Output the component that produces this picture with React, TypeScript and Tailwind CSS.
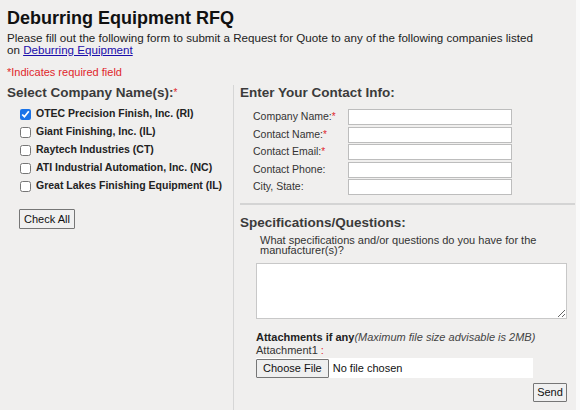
import React from "react";

const companies = [
  "OTEC Precision Finish, Inc. (RI)",
  "Giant Finishing, Inc. (IL)",
  "Raytech Industries (CT)",
  "ATI Industrial Automation, Inc. (NC)",
  "Great Lakes Finishing Equipment (IL)",
];

const fields = [
  { label: "Company Name:", req: true },
  { label: "Contact Name:", req: true },
  { label: "Contact Email:", req: true },
  { label: "Contact Phone:", req: false },
  { label: "City, State:", req: false },
];

export default function App() {
  return (
    <div className="w-[580px] h-[410px] bg-[#fafafa] overflow-hidden" style={{ fontFamily: '"Liberation Sans", Arial, sans-serif' }}>
      <div className="w-[576px] h-[410px] bg-[#f0efee] text-[#222]">
        <div className="pl-[7px] pt-[7px]">
          <h1 className="text-[18px] leading-[22px] font-bold text-[#111]">Deburring Equipment RFQ</h1>
          <p className="text-[11.6px] leading-[12px] mt-[3px] w-[565px] text-[#222]">
            Please fill out the following form to submit a Request for Quote to any of the following companies listed
            <br />
            on <a className="text-[#1a0dab] underline" href="#">Deburring Equipment</a>
          </p>
          <p className="text-[11px] leading-[12px] text-[#e0262b] mt-[10px]">*Indicates required field</p>
        </div>
        <div className="flex mt-[7px]">
          <div className="w-[234px] pl-[7px] border-r border-[#d6d6d6] h-[330px]">
            <h2 className="text-[13.5px] leading-[16px] font-bold text-[#3b3b3b]">
              Select Company Name(s):<span className="text-[#e0262b] text-[10px] align-top font-normal">*</span>
            </h2>
            <div className="mt-[4px] pl-[13px] flex flex-col">
              {companies.map((c, i) => (
                <label key={c} className="flex items-center h-[18px] text-[10.5px] font-bold text-[#222]">
                  <input type="checkbox" defaultChecked={i === 0} className="w-[11px] h-[11px] m-0 mr-[5px] accent-[#1a73e8]" />
                  {c}
                </label>
              ))}
            </div>
            <button className="mt-[14px] ml-[12px] h-[20px] w-[56px] text-[11px] bg-[#f0f0f0] border border-[#767676] rounded-[1px] text-[#111]">
              Check All
            </button>
          </div>
          <div className="flex-1 pl-[6px]">
            <h2 className="text-[13.5px] leading-[16px] font-bold text-[#3b3b3b]">Enter Your Contact Info:</h2>
            <div className="mt-[8px] pl-[13px] flex flex-col gap-[1.5px]">
              {fields.map((f) => (
                <div key={f.label} className="flex items-center h-[16px]">
                  <span className="w-[95px] text-[10.5px] text-[#333]">
                    {f.label}
                    {f.req && <span className="text-[#e0262b] text-[10px] align-top">*</span>}
                  </span>
                  <input className="w-[164px] h-[16px] bg-white border border-[#bdbdbd]" />
                </div>
              ))}
            </div>
            <div className="mt-[8px] mr-[1px] border-t-2 border-[#d4d4d4]"></div>
            <h2 className="mt-[10px] text-[13.5px] leading-[16px] font-bold text-[#3b3b3b]">Specifications/Questions:</h2>
            <div className="pl-[20px] mt-[4px]">
              <p className="text-[11px] leading-[10px] text-[#333] w-[290px]">
                What specifications and/or questions do you have for the manufacturer(s)?
              </p>
            </div>
            <div className="pl-[16px] mt-[8px]">
              <textarea className="block w-[311px] h-[56px] bg-white border border-[#c8c8c8] resize-y"></textarea>
              <p className="mt-[12px] text-[11px] leading-[13px] text-[#222]">
                <span className="font-bold">Attachments if any</span>
                <span className="italic text-[#444]">(Maximum file size advisable is 2MB)</span>
              </p>
              <p className="text-[11px] leading-[13px] text-[#333]">Attachment1 <span className="text-[#e0262b]">:</span></p>
              <div className="mt-[1px] w-[277px] h-[20px] bg-white flex items-center">
                <span className="h-[19px] px-[6px] flex items-center text-[11px] bg-[#efefef] border border-[#767676] rounded-[1px] text-[#111]">Choose File</span>
                <span className="ml-[4px] text-[11px] text-[#111]">No file chosen</span>
              </div>
              <div className="flex justify-end w-[311px] mt-[5px]">
                <button className="h-[19px] w-[34px] text-[11px] bg-[#f0f0f0] border border-[#767676] rounded-[1px] text-[#111]">Send</button>
              </div>
            </div>
          </div>
        </div>
      </div>
    </div>
  );
}
